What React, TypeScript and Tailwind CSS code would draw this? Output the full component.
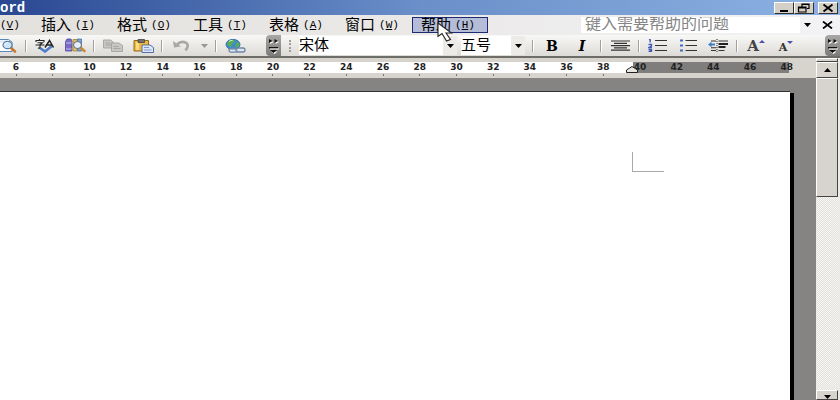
import type { ReactNode } from 'react';

const menus = [
  { label: '插入', hotkey: 'I' },
  { label: '格式', hotkey: 'O' },
  { label: '工具', hotkey: 'T' },
  { label: '表格', hotkey: 'A' },
  { label: '窗口', hotkey: 'W' },
  { label: '帮助', hotkey: 'H', active: true },
];

const rulerMarks = Array.from({ length: 22 }, (_, i) => 6 + i * 2);

function Hotkey({ letter }: { letter: string }) {
  return (
    <span className="font-['Liberation_Mono',monospace] text-[11px]">
      (<span className="underline underline-offset-1">{letter}</span>)
    </span>
  );
}

function ToolButton({ label, children }: { label: string; children: ReactNode }) {
  return (
    <button type="button" aria-label={label} className="flex h-5 w-[30px] shrink-0 items-center justify-center">
      {children}
    </button>
  );
}

function Separator() {
  return (
    <div className="flex w-2 shrink-0 justify-center">
      <div className="h-3 w-0.5 border-r border-l border-r-white border-l-[#a3a09c]" />
    </div>
  );
}

function Caret({ className }: { className: string }) {
  return (
    <svg width="7" height="4" viewBox="0 0 7 4" className={className} aria-hidden="true">
      <path d="M0 0h7L3.5 4z" fill="currentColor" />
    </svg>
  );
}

function MoreButton({ label }: { label: string }) {
  return (
    <button
      type="button"
      aria-label={label}
      className="flex h-[21px] w-[15px] shrink-0 items-center justify-center self-end rounded-l-sm bg-gradient-to-b from-[#aaa8a6] to-[#7d7b79]"
    >
      <svg width="13" height="17" viewBox="0 0 13 17">
        <path d="M3 3l3.500 2L3 7zM8.500 3L12 5 8.500 7zM4 14.500h6.500L7.500 17z" fill="#fff" />
        <path d="M2 2l3.500 2L2 6zM7.500 2L11 4 7.500 6zM2 10h9v1.500H2zM3 13h7l-3.500 3z" fill="#111" />
        <path d="M3 11.500h9v1H3z" fill="#fff" />
      </svg>
    </button>
  );
}

function Picker({ label, value, className }: { label: string; value: string; className: string }) {
  return (
    <div className={`grid h-[19px] shrink-0 bg-white ${className}`}>
      <select
        aria-label={label}
        className="col-start-1 row-start-1 w-full appearance-none bg-transparent pb-0.5 text-[15px] leading-4 text-black"
      >
        <option>{value}</option>
      </select>
      <div className="pointer-events-none col-start-1 row-start-1 flex w-3.5 items-center justify-center justify-self-end bg-[#ecebe7]">
        <Caret className="text-black" />
      </div>
    </div>
  );
}

function TitleBar() {
  const button =
    'flex h-[12px] w-[20px] items-center justify-center border border-t-white border-l-white border-r-[#303030] border-b-[#303030] bg-[#d4d0c8]';
  return (
    <header className="flex h-[15px] items-center justify-between bg-gradient-to-r from-[#2a4792] via-[#6a8fc9] to-[#8db2e3] pr-0.5">
      <h1 className="font-['Liberation_Mono',monospace] text-[14px] leading-4 font-bold text-white">ord</h1>
      <div className="flex">
        <button type="button" aria-label="最小化" className={button}>
          <svg width="16" height="10" viewBox="0 0 16 10">
            <path d="M4 7h8v2H4z" />
          </svg>
        </button>
        <button type="button" aria-label="还原" className={button}>
          <svg width="16" height="10" viewBox="0 0 16 10" fill="none" stroke="#000">
            <path d="M6 3.500V1h7v4.500h-2M6 1.500h7M2.500 4h7.500v5H2.500zM2.500 4.800h7.500" strokeWidth="1.200" />
          </svg>
        </button>
        <button type="button" aria-label="关闭" className={`${button} ml-1`}>
          <svg width="16" height="10" viewBox="0 0 16 10" stroke="#000" strokeWidth="1.800">
            <path d="M3.500 1.500l9 7M12.500 1.500l-9 7" />
          </svg>
        </button>
      </div>
    </header>
  );
}

function MenuBar() {
  return (
    <nav className="flex h-5 items-center bg-gradient-to-r from-[#e3e1dd] to-[#f3f2f4] text-[15px] leading-4">
      <button type="button" className="flex w-8 shrink-0">
        <Hotkey letter="V" />
      </button>
      {menus.map((menu) => (
        <button
          key={menu.label}
          type="button"
          className={`relative flex h-4 w-[76px] shrink-0 items-center gap-1 border pl-2 ${
            menu.active ? 'border-[#1d2c72] bg-[#b4bcd8]' : 'border-transparent'
          }`}
        >
          <span>{menu.label}</span>
          <Hotkey letter={menu.hotkey} />
          {menu.active && (
            <svg className="absolute top-1 left-6 z-10" width="17" height="20" viewBox="0 0 17 20">
              <path
                d="M1 1v13.500l4-3 4.500 7.500 4-1.500-4.500-6.500h5.500z"
                fill="#fff"
                stroke="#222"
                strokeWidth="1.100"
              />
            </svg>
          )}
        </button>
      ))}
      <div className="min-w-4 flex-1" />
      <input
        type="text"
        aria-label="键入需要帮助的问题"
        placeholder="键入需要帮助的问题"
        className="h-4 w-[219px] bg-white pb-0.5 pl-1 text-[16px] leading-4 placeholder:text-[#858585]"
      />
      <button type="button" aria-label="最近的问题" className="flex h-4 w-3.5 items-center justify-center">
        <Caret className="text-black" />
      </button>
      <button type="button" aria-label="关闭窗口" className="flex h-4 w-[26px] items-center justify-center">
        <svg width="11" height="8" viewBox="0 0 11 8" stroke="#000" strokeWidth="1.700">
          <path d="M1 .5l9 7M10 .5l-9 7" />
        </svg>
      </button>
    </nav>
  );
}

function PreviewIcon() {
  return (
    <svg width="17" height="14" viewBox="0 0 17 14">
      <path d="M-3 .5h11.500L12 3v9.500H-3z" fill="#fff" stroke="#5b86b8" />
      <path d="M-2 1.500h9v2h-9z" fill="#dbe8f6" />
      <path d="M10.500 8.500l4.500 4" stroke="#c9792f" strokeWidth="2.600" strokeLinecap="round" />
      <ellipse cx="7.500" cy="6" rx="4.500" ry="3.700" fill="#cfe5f8" stroke="#5b7fa6" strokeWidth="1.200" />
      <path d="M5 5.500q1-2 3-2" stroke="#fff" fill="none" />
    </svg>
  );
}

function SpellingIcon() {
  return (
    <svg width="20" height="14" viewBox="0 0 20 14" fill="none">
      <path d="M5 9l5 3.500L17 7" stroke="#4d7fcb" strokeWidth="2.600" />
      <path d="M1 3V1.500h8V3M4.500 0v1.500M2.500 3.700h5L5 5.500v3q0 1-2 .5M.5 6h9" stroke="#222" strokeWidth="1.100" />
      <path d="M10 8.500l4.500-7 4 7M11.500 6h6" stroke="#222" strokeWidth="1.500" />
    </svg>
  );
}

function ResearchIcon() {
  return (
    <svg width="21" height="15" viewBox="0 0 21 15">
      <path d="M.5 3.500L2 1h4l1 2.500V13H.5z" fill="#7a6cc4" stroke="#51479a" strokeWidth="0.800" />
      <path d="M1 5h5.500M1 11h5.500" stroke="#c6bff0" />
      <path d="M8 1.500h4V13H8z" fill="#e7c45a" stroke="#a3842d" strokeWidth="0.800" />
      <path d="M12.500 1h4V13h-4z" fill="#7ea5d8" stroke="#456ea6" strokeWidth="0.800" />
      <path d="M15.500 9.500l4 3.500" stroke="#c98b35" strokeWidth="2.600" strokeLinecap="round" />
      <ellipse cx="12.500" cy="7" rx="4" ry="3.500" fill="#e3f0fb" stroke="#666b75" />
    </svg>
  );
}

function CopyIcon() {
  return (
    <svg width="20" height="13" viewBox="0 0 20 13" fill="#c9c7c4" stroke="#a4a2a0" strokeWidth="0.900">
      <path d="M.5 1h7l3 2.500V9H.5z" />
      <path d="M2.500 4h5M2.500 6h6" />
      <path d="M8.500 4h7.500l3.500 2.500V12.500h-11z" />
      <path d="M10.500 7.500h5M10.500 9.500h7" />
    </svg>
  );
}

function PasteIcon() {
  return (
    <svg width="21" height="14" viewBox="0 0 21 14">
      <path d="M1 1.500h14.500V12H1z" fill="#efb83e" stroke="#93681b" />
      <path d="M3 3h3v8H3z" fill="#fbdc85" />
      <path d="M5 0.500h6.500v3H5z" fill="#73706c" stroke="#444" strokeWidth="0.800" />
      <path d="M9 6h8l3.500 2.500v5H9z" fill="#dfe7f7" stroke="#56709f" />
      <path d="M11 8.500h5M11 11h7.500" stroke="#7e99c8" />
    </svg>
  );
}

function LinkIcon() {
  return (
    <svg width="21" height="14" viewBox="0 0 21 14">
      <ellipse cx="8" cy="5.500" rx="7" ry="5.200" fill="#3c8bd0" stroke="#2b6398" strokeWidth="0.800" />
      <path d="M3 2.500q3-2.500 6-1.500l1 2-3 2-1 3-4-2zM11 4l3-1 .5 3-2.500 3-2-1.500z" fill="#59ad55" />
      <path d="M4 2.500q2-1.500 3.500-1" stroke="#c9f1cd" fill="none" />
      <g fill="#dce5f0" fillOpacity="0.700" stroke="#6f87a8" strokeWidth="1.300">
        <rect x="4" y="9.500" width="8.500" height="3.700" rx="1.800" />
        <rect x="11" y="9" width="9" height="4" rx="2" />
      </g>
    </svg>
  );
}

function NumberingIcon() {
  return (
    <svg width="20" height="13" viewBox="0 0 20 13" fill="none">
      <path d="M1 1l1.200-.5v3M.5 5.500h3v1.500l-2.500 1.500h3M.5 10.500h3v2.200H.5M1.500 11.600h2" stroke="#3f5bb5" strokeWidth="1.300" />
      <path d="M7 1.500h12M7 6.500h12M7 11.500h12" stroke="#333" strokeWidth="1.200" />
    </svg>
  );
}

function BulletsIcon() {
  return (
    <svg width="18" height="13" viewBox="0 0 18 13">
      <path d="M1 .5h3v2H1zM1 5.500h3v2H1zM1 10.500h3v2H1z" fill="#3f6cc0" />
      <path d="M6.500 1.500H18M6.500 6.500H18M6.500 11.500H18" stroke="#333" strokeWidth="1.200" />
    </svg>
  );
}

function IndentIcon() {
  return (
    <svg width="21" height="13" viewBox="0 0 21 13">
      <path d="M3 2h5M10.500 2H20M3 11.500h5M10.500 11.500h6M3 8.700h5" stroke="#333" strokeWidth="1.100" />
      <path d="M10.500 5h9.500M10.500 8h7" stroke="#222" strokeWidth="2" />
      <path d="M9 0v13" stroke="#222" strokeDasharray="1 1" />
      <path d="M0 5.500L3.500 2.800v1.700H7v2H3.500v1.700z" fill="#3d80c8" />
    </svg>
  );
}

function Toolbar() {
  return (
    <div className="flex h-[23px] items-center border-b-2 border-[#6f6d68] bg-gradient-to-b from-[#f8f8f7] to-[#dddbd6]">
      <button type="button" aria-label="打印预览" className="flex w-[22px] shrink-0">
        <PreviewIcon />
      </button>
      <Separator />
      <ToolButton label="拼写和语法"><SpellingIcon /></ToolButton>
      <ToolButton label="信息检索"><ResearchIcon /></ToolButton>
      <Separator />
      <ToolButton label="复制"><CopyIcon /></ToolButton>
      <ToolButton label="粘贴"><PasteIcon /></ToolButton>
      <Separator />
      <ToolButton label="撤消">
        <svg width="16" height="12" viewBox="0 0 16 12">
          <path d="M4 4.500q4-4 8.500-2t0 8" fill="none" stroke="#aaa8a6" strokeWidth="2.600" />
          <path d="M0 1l1 6.500 7-1z" fill="#aaa8a6" />
        </svg>
      </ToolButton>
      <button type="button" aria-label="撤消列表" className="flex w-4 shrink-0 justify-center">
        <Caret className="text-[#9a9896]" />
      </button>
      <Separator />
      <ToolButton label="插入超链接"><LinkIcon /></ToolButton>
      <div className="w-4 shrink-0" />
      <MoreButton label="常用工具栏选项" />
      <div className="mx-2 h-3 w-0 shrink-0 border-l-2 border-dotted border-[#a09e9a]" />
      <Picker label="字体" value="宋体" className="mr-1 w-[158px]" />
      <Picker label="字号" value="五号" className="mr-1 w-16" />
      <Separator />
      <ToolButton label="加粗">
        <span className="font-['DejaVu_Serif','Liberation_Serif',serif] text-[14px] leading-4 font-bold">B</span>
      </ToolButton>
      <ToolButton label="倾斜">
        <span className="font-['DejaVu_Serif','Liberation_Serif',serif] text-[14px] leading-4 font-bold italic">I</span>
      </ToolButton>
      <Separator />
      <ToolButton label="居中">
        <svg width="19" height="11" viewBox="0 0 19 11" stroke="#333" strokeWidth="1.200">
          <path d="M0 1h19M3 3.300h13M0 5.600h19M3 7.900h13M0 10.200h19" />
        </svg>
      </ToolButton>
      <Separator />
      <ToolButton label="编号"><NumberingIcon /></ToolButton>
      <ToolButton label="项目符号"><BulletsIcon /></ToolButton>
      <ToolButton label="减少缩进量"><IndentIcon /></ToolButton>
      <Separator />
      <ToolButton label="增大字体">
        <span className="font-['DejaVu_Serif','Liberation_Serif',serif] text-[15px] leading-4 font-bold text-[#444]">A</span>
        <svg width="6" height="12" viewBox="0 0 6 12">
          <path d="M0 3l3-3 3 3z" fill="#4a4fa8" />
        </svg>
      </ToolButton>
      <ToolButton label="缩小字体">
        <span className="pt-1 font-['DejaVu_Serif','Liberation_Serif',serif] text-[11px] leading-4 font-bold text-[#333]">A</span>
        <svg width="6" height="12" viewBox="0 0 6 12">
          <path d="M0 1h6L3 4z" fill="#4a4fa8" />
        </svg>
      </ToolButton>
      <div className="flex-1" />
      <MoreButton label="格式工具栏选项" />
    </div>
  );
}

function Ruler() {
  return (
    <div className="grid h-5 shrink-0 bg-[#d6d4cc] pt-1">
      <div className="col-start-1 row-start-1 flex h-[11px] pr-[27px]">
        <div className="flex-1 bg-white" />
        <div className="w-[156px] bg-[#807e7c]" />
      </div>
      <div className="col-start-1 row-start-1 flex justify-between pr-[17px] pl-1">
        {rulerMarks.map((mark) => (
          <div key={mark} className="flex w-6 flex-col items-center">
            <span className="font-['DejaVu_Sans',sans-serif] text-[9px] leading-[11px] font-bold text-[#222]">{mark}</span>
            {mark < 40 && <span className="mt-px h-0.5 w-px bg-[#777]" />}
          </div>
        ))}
      </div>
      <svg
        className="col-start-1 row-start-1 mt-1 mr-[178px] justify-self-end"
        width="12"
        height="7"
        viewBox="0 0 12 7"
      >
        <path d="M.5 6.500V4L6 .5 11.500 4v2.500z" fill="#e8e6e0" stroke="#222" />
      </svg>
    </div>
  );
}

function ScrollBar() {
  const raised = 'border border-t-white border-l-white border-r-[#444] border-b-[#444] bg-[#d6d4cc]';
  return (
    <div className="mr-0.5 flex w-[22px] shrink-0 flex-col bg-[#edebe7] bg-[repeating-conic-gradient(#e3e1dc_0_25%,#f6f5f3_0_50%)] bg-[length:2px_2px]">
      <div className={`h-1 ${raised}`} />
      <button type="button" aria-label="向上滚动" className={`flex h-4 items-center justify-center ${raised}`}>
        <Caret className="rotate-180 text-black" />
      </button>
      <div className={`h-[119px] ${raised}`} />
      <div className="flex-1" />
      <button type="button" aria-label="向下滚动" className={`flex h-2.5 items-end justify-center ${raised}`}>
        <Caret className="text-black" />
      </button>
    </div>
  );
}

export default function App() {
  return (
    <div className="flex min-h-screen flex-col overflow-hidden bg-[#edebe7] font-['Liberation_Sans','Noto_Sans_CJK_SC',sans-serif] text-black">
      <TitleBar />
      <MenuBar />
      <Toolbar />
      <div className="flex flex-1">
        <div className="flex min-w-0 flex-1 flex-col">
          <Ruler />
          <main className="flex flex-1 bg-[#868383] pt-[13px] pr-[22px]">
            <div className="flex flex-1 border-t border-[#333] bg-white">
              {/* margin corner mark */}
              <div className="mt-[60px] mr-[126px] ml-auto h-5 w-8 border-b border-l border-[#aaa]" />
            </div>
            {/* page shadow */}
            <div className="mt-0.5 w-1 bg-black" />
          </main>
        </div>
        <ScrollBar />
      </div>
    </div>
  );
}
